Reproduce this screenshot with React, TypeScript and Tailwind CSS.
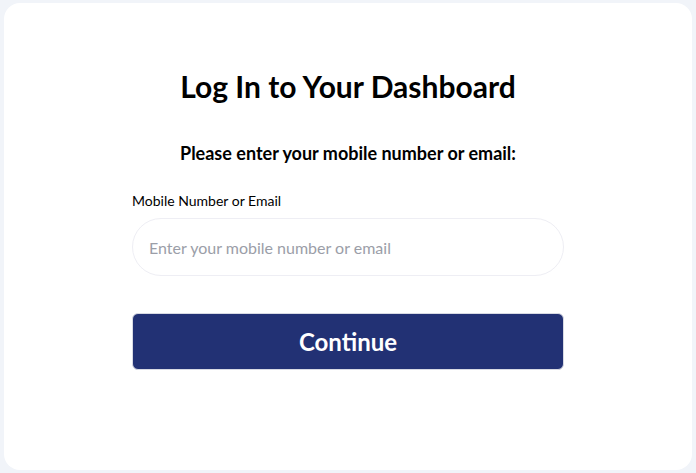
export default function App() {
  return (
    <div className="min-h-[473px] bg-[#f1f4f9] px-1 pt-[3px] pb-[3px]" style={{ fontFamily: "Lato, 'Noto Sans', sans-serif" }}>
      <div className="h-[467px] rounded-2xl bg-white flex flex-col items-center">
        <h1 className="mt-[63px] text-[30px] leading-[40px] font-bold text-black">Log In to Your Dashboard</h1>
        <p className="mt-[35px] text-[18px] leading-[24px] font-bold text-black">Please enter your mobile number or email:</p>
        <div className="mt-[27px] w-[432px] flex flex-col">
          <label className="text-[14px] leading-[18px] text-black">Mobile Number or Email</label>
          <input
            className="mt-[8px] h-[58px] w-full rounded-full border border-[#eeeef4] px-4 text-[16px] text-black placeholder:text-[#9b9ea8] outline-none"
            placeholder="Enter your mobile number or email"
          />
          <button className="mt-[37px] h-[57px] w-full rounded-md border border-[#d8dae3] bg-[#223174] text-white text-[24px] font-bold">
            Continue
          </button>
        </div>
      </div>
    </div>
  );
}
